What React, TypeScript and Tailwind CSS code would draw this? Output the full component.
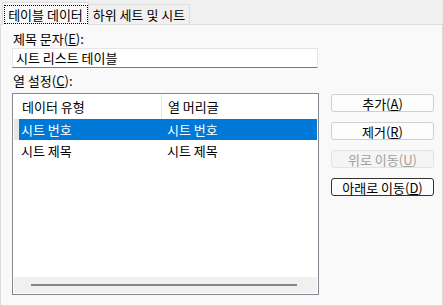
import React from "react";

const rows = [
  { type: "시트 번호", header: "시트 번호", selected: true },
  { type: "시트 제목", header: "시트 제목", selected: false },
];

function Btn({ label, hot, disabled, focused }: { label: string; hot: string; disabled?: boolean; focused?: boolean }) {
  return (
    <div
      className={
        "flex h-[18px] w-[103px] items-center justify-center rounded-[3px] border leading-none " +
        (disabled
          ? "border-[#e3e3e3] bg-[#f5f5f5] text-[#a0a0a0]"
          : focused
          ? "border-[#333] bg-[#fdfdfd] text-black"
          : "border-[#cfcfcf] bg-[#fdfdfd] text-black")
      }
    >
      {label}(<span className="underline underline-offset-1">{hot}</span>)
    </div>
  );
}

export default function App() {
  return (
    <div className="flex h-[306px] w-[443px] flex-col bg-[#f0f0f0] font-['Noto_Sans_CJK_KR',sans-serif] text-[13px] text-black">
      <div className="flex h-[24px] items-end pl-[2px]">
        <div className="relative z-10 -mb-px flex h-[23px] w-[87px] items-center justify-center border-x border-t border-[#dcdcdc] bg-[#f9f9f9]">
          <span className="flex h-[19px] w-[84px] items-center justify-center border border-dotted border-black leading-none">
            테이블 데이터
          </span>
        </div>
        <div className="flex h-[20px] w-[101px] items-center justify-center border-r border-t border-[#dcdcdc] leading-none">
          하위 세트 및 시트
        </div>
      </div>
      <div className="flex flex-1 gap-[12px] border border-[#dcdcdc] bg-[#f9f9f9] pl-[11px] pr-[9px]">
        <div className="flex w-[307px] flex-col">
          <div className="mt-[5px] h-[17px] pl-[1px] leading-[17px]">
            제목 문자(<span className="underline underline-offset-1">E</span>):
          </div>
          <div className="mt-[1px] flex h-[20px] w-[306px] items-center border border-b-[#7a7a7a] border-x-[#e5e5e5] border-t-[#e5e5e5] bg-white pl-[3px]">
            시트 리스트 테이블
          </div>
          <div className="mt-[4px] h-[17px] pl-[1px] leading-[17px]">
            열 설정(<span className="underline underline-offset-1">C</span>):
          </div>
          <div className="mt-[4px] flex h-[202px] w-[307px] flex-col border border-[#828790] bg-white p-px">
            <div className="flex h-[24px] pl-[7px]">
              <div className="flex w-[141px] items-center border-r border-[#e5e5e5] pl-px">데이터 유형</div>
              <div className="flex items-center pl-[6px]">열 머리글</div>
            </div>
            {rows.map((r) => (
              <div key={r.type} className="flex h-[21px]">
                <div className={"w-[5px] " + (r.selected ? "bg-[#e8e8e8]" : "")} />
                <div className={"flex flex-1 items-center " + (r.selected ? "bg-[#0078d7] text-white" : "")}>
                  <div className="w-[142px] pl-[2px]">{r.type}</div>
                  <div className="pl-[6px]">{r.header}</div>
                </div>
              </div>
            ))}
            <div className="flex-1" />
            <div className="flex h-[16px] items-center bg-[#f0f0f0] pl-[17px] pr-[20px]">
              <div className="h-[2px] flex-1 bg-[#858585]" />
            </div>
          </div>
        </div>
        <div className="mt-[69px] flex flex-col gap-[10px]">
          <Btn label="추가" hot="A" />
          <Btn label="제거" hot="R" />
          <Btn label="위로 이동" hot="U" disabled />
          <Btn label="아래로 이동" hot="D" focused />
        </div>
      </div>
    </div>
  );
}
